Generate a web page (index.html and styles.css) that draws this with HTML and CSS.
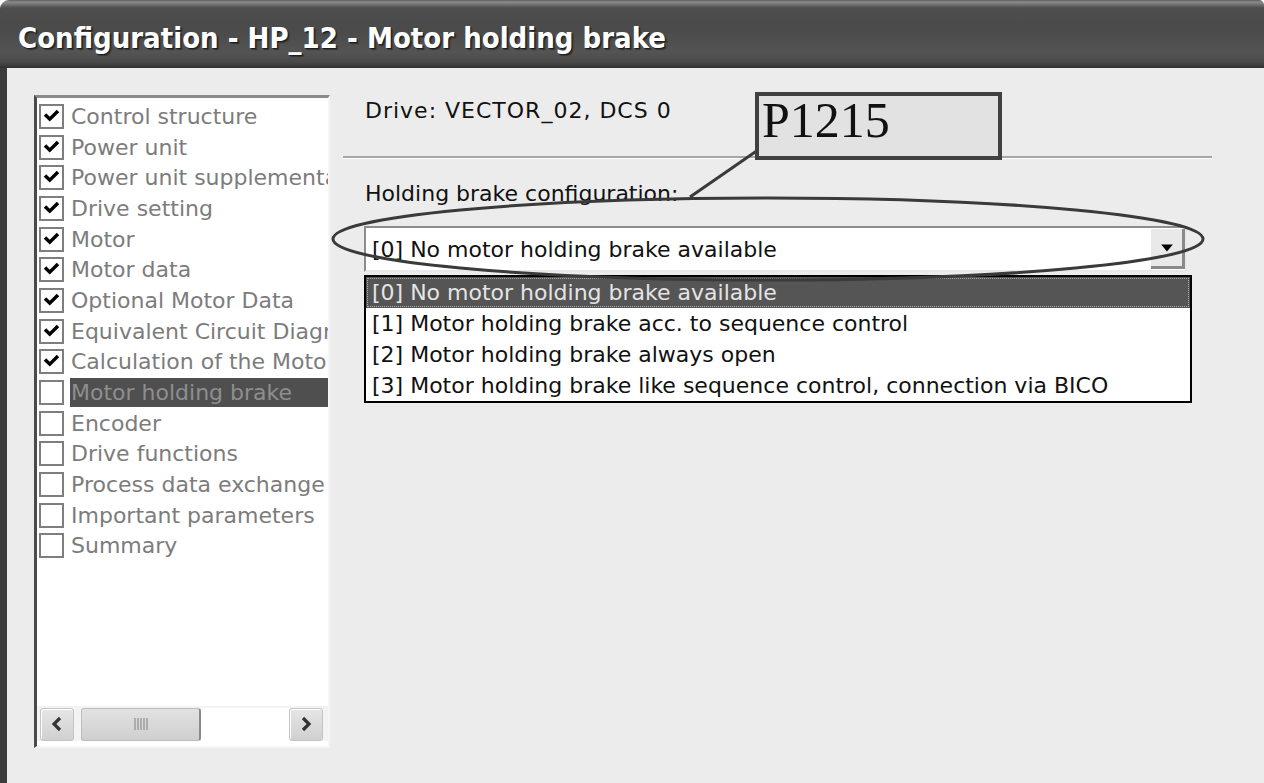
FILE: index.html
```html
<!DOCTYPE html>
<html lang="en">
<head>
<meta charset="utf-8">
<title>Configuration - HP_12 - Motor holding brake</title>
<link rel="stylesheet" href="styles.css">
</head>
<body>
<div class="window">
  <div class="titlebar"><span class="title">Configuration - HP_12 - Motor holding brake</span></div>
  <div class="frame">
    <div class="body">
      <div class="nav">
        <ul class="steps">
          <li class="step"><span class="cb"><svg viewBox="0 0 24 24"><path d="M6 11 L10 15 L18 7"/></svg></span><span class="lbl">Control structure</span></li>
          <li class="step"><span class="cb"><svg viewBox="0 0 24 24"><path d="M6 11 L10 15 L18 7"/></svg></span><span class="lbl">Power unit</span></li>
          <li class="step"><span class="cb"><svg viewBox="0 0 24 24"><path d="M6 11 L10 15 L18 7"/></svg></span><span class="lbl">Power unit supplementary data</span></li>
          <li class="step"><span class="cb"><svg viewBox="0 0 24 24"><path d="M6 11 L10 15 L18 7"/></svg></span><span class="lbl">Drive setting</span></li>
          <li class="step"><span class="cb"><svg viewBox="0 0 24 24"><path d="M6 11 L10 15 L18 7"/></svg></span><span class="lbl">Motor</span></li>
          <li class="step"><span class="cb"><svg viewBox="0 0 24 24"><path d="M6 11 L10 15 L18 7"/></svg></span><span class="lbl">Motor data</span></li>
          <li class="step"><span class="cb"><svg viewBox="0 0 24 24"><path d="M6 11 L10 15 L18 7"/></svg></span><span class="lbl">Optional Motor Data</span></li>
          <li class="step"><span class="cb"><svg viewBox="0 0 24 24"><path d="M6 11 L10 15 L18 7"/></svg></span><span class="lbl">Equivalent Circuit Diagram</span></li>
          <li class="step"><span class="cb"><svg viewBox="0 0 24 24"><path d="M6 11 L10 15 L18 7"/></svg></span><span class="lbl">Calculation of the Motor Data</span></li>
          <li class="step active"><span class="cb"></span><span class="lbl">Motor holding brake</span></li>
          <li class="step"><span class="cb"></span><span class="lbl">Encoder</span></li>
          <li class="step"><span class="cb"></span><span class="lbl">Drive functions</span></li>
          <li class="step"><span class="cb"></span><span class="lbl">Process data exchange</span></li>
          <li class="step"><span class="cb"></span><span class="lbl">Important parameters</span></li>
          <li class="step"><span class="cb"></span><span class="lbl">Summary</span></li>
        </ul>
        <div class="hscroll">
          <span class="sbtn"><svg viewBox="0 0 20 20"><path d="M13 4 L7 10 L13 16"/></svg></span>
          <span class="thumb"><svg viewBox="0 0 20 14"><path d="M4 1 V13 M7 1 V13 M10 1 V13 M13 1 V13 M16 1 V13"/></svg></span>
          <span class="track"></span>
          <span class="sbtn"><svg viewBox="0 0 20 20"><path d="M7 4 L13 10 L7 16"/></svg></span>
        </div>
      </div>
      <div class="main">
        <div class="drive">Drive: VECTOR_02, DCS 0</div>
        <div class="sep"></div>
        <div class="label">Holding brake configuration:</div>
        <div class="combo">
          <span class="combo-text">[0] No motor holding brake available</span>
          <span class="combo-btn"><svg viewBox="0 0 12 8"><path d="M1 1 H11 L6 7 Z"/></svg></span>
        </div>
        <ul class="options">
          <li class="opt sel">[0] No motor holding brake available</li>
          <li class="opt">[1] Motor holding brake acc. to sequence control</li>
          <li class="opt">[2] Motor holding brake always open</li>
          <li class="opt">[3] Motor holding brake like sequence control, connection via BICO</li>
        </ul>
      </div>
    </div>
  </div>
  <svg class="annot" viewBox="0 0 1264 783">
    <ellipse cx="768" cy="239" rx="435" ry="41"/>
    <path d="M758 150 L690 197"/>
  </svg>
  <div class="callout">P1215</div>
</div>
</body>
</html>
```
FILE: styles.css
```css
* { box-sizing: border-box; }
html, body { margin: 0; padding: 0; }
body { background: #ffffff; width: 1264px; height: 783px; overflow: hidden; }

.window {
  position: relative;
  width: 1264px;
  height: 783px;
  display: flex;
  flex-direction: column;
  border-top-left-radius: 9px;
  border-top-right-radius: 5px;
  overflow: hidden;
  background: #ececec;
  font-family: "DejaVu Sans", "Liberation Sans", sans-serif;
}

.titlebar {
  height: 68px;
  flex: none;
  display: flex;
  align-items: flex-start;
  padding-left: 18px;
  background: linear-gradient(to bottom, #5e5e5e 0px, #8c8c8c 2px, #777 4px, #4e4e4e 8px, #4a4a4a 30px, #545454 52px, #4a4a4a 62px, #3a3a3a 66px, #2e2e2e 68px);
}
.title {
  margin-top: 21px;
  font-family: "DejaVu Sans Condensed", "DejaVu Sans", sans-serif;
  font-stretch: condensed;
  font-weight: bold;
  font-size: 29px;
  line-height: 34px;
  letter-spacing: 0;
  color: #ffffff;
  text-shadow: 1px 1px 0 #1e1e1e, 2px 2px 1px #333;
  white-space: nowrap;
}

.frame {
  flex: 1;
  display: flex;
  border-left: 7px solid #3c3c3c;
  background: #ececec;
}
.body {
  flex: 1;
  display: flex;
  padding: 27px 0 0 27px;
}

/* left navigation list */
.nav {
  width: 296px;
  height: 653px;
  flex: none;
  display: flex;
  flex-direction: column;
  background: #ffffff;
  border-top: 3px solid #8a8a8a;
  border-left: 3px solid #4a4a4a;
  border-right: 2px solid #f6f6f6;
  border-bottom: 2px solid #f6f6f6;
}
.steps {
  flex: 1;
  list-style: none;
  margin: 0;
  padding: 3px 0 0 0;
  overflow: hidden;
}
.step {
  height: 30.7px;
  display: flex;
  align-items: center;
  padding-left: 2px;
  font-size: 22px;
  color: #7c7c7c;
  white-space: nowrap;
}
.cb {
  width: 25px;
  height: 25px;
  flex: none;
  border: 2px solid #7e7e7e;
  background: #ffffff;
  display: flex;
  align-items: center;
  justify-content: center;
}
.cb svg { width: 21px; height: 21px; }
.cb path { fill: none; stroke: #000; stroke-width: 4; stroke-linecap: square; stroke-linejoin: miter; }
.lbl {
  flex: 1;
  margin-left: 6px;
  padding-left: 1px;
  height: 29px;
  line-height: 29px;
  overflow: hidden;
}
.step.active .lbl {
  background: #4f4f4f;
  color: #8e8e8e;
}

.hscroll {
  height: 35px;
  flex: none;
  display: flex;
  align-items: center;
  padding: 1px 5px 0 3px;
  margin-bottom: 5px;
  background: #f3f3f3;
}
.sbtn {
  width: 34px;
  height: 33px;
  flex: none;
  display: flex;
  align-items: center;
  justify-content: center;
  border: 1px solid #c4c4c4;
  border-radius: 3px;
  background: linear-gradient(to bottom, #e6e6e6, #d0d0d0);
  box-shadow: 1px 1px 0 #ffffff inset;
}
.sbtn svg { width: 20px; height: 20px; }
.sbtn path { fill: none; stroke: #333; stroke-width: 3.2; }
.thumb {
  width: 120px;
  height: 33px;
  flex: none;
  margin-left: 7px;
  display: flex;
  align-items: center;
  justify-content: center;
  border: 1px solid #bdbdbd;
  border-right: 2px solid #8a8a8a;
  border-radius: 3px;
  background: linear-gradient(to bottom, #e2e2e2, #cfcfcf);
}
.thumb svg { width: 20px; height: 14px; }
.thumb path { stroke: #9a9a9a; stroke-width: 1.4; fill: none; }
.track { flex: 1; height: 33px; background: #ffffff; }

/* right side */
.main {
  flex: 1;
  margin-left: 13px;
  margin-top: -27px;
  padding-right: 52px;
  display: flex;
  flex-direction: column;
  align-items: flex-start;
}
.drive {
  margin-top: 30px;
  margin-left: 22px;
  font-size: 22px;
  line-height: 26px;
  letter-spacing: 1px;
  color: #111;
}
.sep {
  align-self: stretch;
  margin-top: 32px;
  height: 3px;
  border-top: 2px solid #a6a6a6;
  border-bottom: 1px solid #fbfbfb;
}
.label {
  margin-top: 22px;
  margin-left: 22px;
  font-size: 22px;
  line-height: 26px;
  color: #111;
}
.combo {
  margin-top: 19px;
  margin-left: 21px;
  width: 823px;
  height: 46px;
  display: flex;
  align-items: center;
  background: #ffffff;
  border-top: 2px solid #8c8c8c;
  border-left: 2px solid #8c8c8c;
  border-right: 2px solid #e8e8e8;
  border-bottom: 2px solid #e8e8e8;
}
.combo-text {
  flex: 1;
  padding-left: 6px;
  font-size: 22px;
  color: #111;
}
.combo-btn {
  width: 34px;
  height: 40px;
  display: flex;
  align-items: center;
  justify-content: center;
  background: #e9e9e9;
  border-right: 3px solid #8a8a8a;
  border-bottom: 3px solid #8a8a8a;
}
.combo-btn svg { width: 14px; height: 10px; }
.combo-btn path { fill: #000; }

.options {
  list-style: none;
  margin: 3px 0 0 21px;
  padding: 0;
  width: 828px;
  border: 2px solid #000;
  background: #ffffff;
}
.opt {
  height: 31px;
  line-height: 31px;
  padding-left: 6px;
  font-size: 22px;
  color: #111;
  white-space: nowrap;
}
.opt.sel {
  background: #555555;
  color: #e4e4e4;
  outline: 1px dotted #aaaaaa;
  outline-offset: -2px;
}

/* annotations */
.annot {
  position: absolute;
  left: 0;
  top: 0;
  width: 1264px;
  height: 783px;
  pointer-events: none;
}
.annot ellipse, .annot path { fill: none; stroke: #3a3a3a; stroke-width: 3; }
.callout {
  position: absolute;
  left: 755px;
  top: 92px;
  width: 247px;
  height: 68px;
  border: 4px solid #404040;
  background: #e2e2e2;
  padding-left: 3px;
  font-family: "Liberation Serif", "DejaVu Serif", serif;
  font-size: 50px;
  line-height: 48px;
  color: #111;
}
```
